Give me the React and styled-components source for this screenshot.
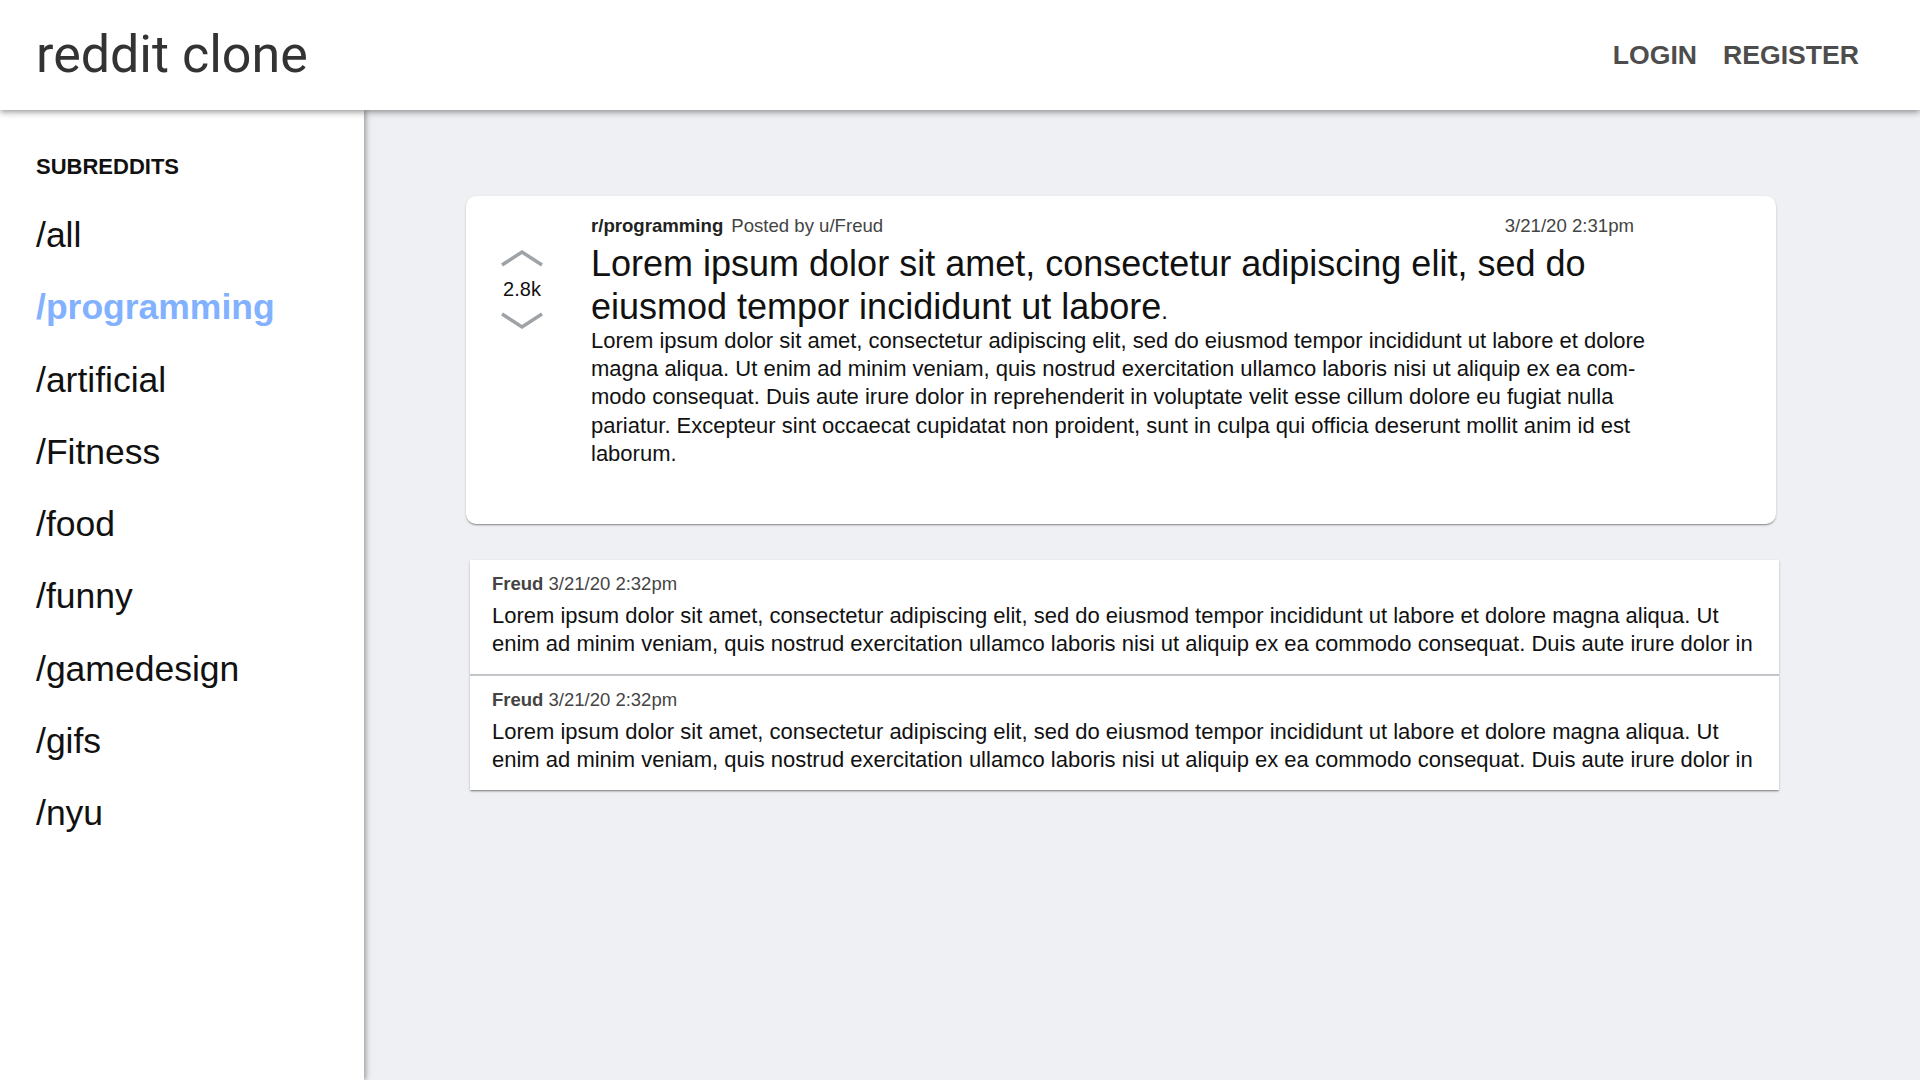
import React from 'react'
import styled, { createGlobalStyle } from 'styled-components'

const subreddits = ['all', 'programming', 'artificial', 'Fitness', 'food', 'funny', 'gamedesign', 'gifs', 'nyu']

const lorem =
  'Lorem ipsum dolor sit amet, consectetur adipiscing elit, sed do eiusmod tempor incididunt ut labore et dolore magna aliqua. Ut enim ad minim veniam, quis nostrud exercitation ullamco laboris nisi ut aliquip ex ea com\u00ADmodo consequat. Duis aute irure dolor in reprehenderit in voluptate velit esse cillum dolore eu fugiat nulla pariatur. Excepteur sint occaecat cupidatat non proident, sunt in culpa qui officia deserunt mollit anim id est laborum.'

const comments = [
  { author: 'Freud', date: '3/21/20 2:32pm', body: lorem },
  { author: 'Freud', date: '3/21/20 2:32pm', body: lorem },
]

const GlobalStyle = createGlobalStyle`
  body {
    margin: 0;
    font-family: "Liberation Sans", Arial, Helvetica, sans-serif;
    background: #eff0f4;
  }
`

const App = () => {
  return (
    <>
      <GlobalStyle />
      <Page>
        <Header>
          <Logo>reddit clone</Logo>
          <Nav>
            <NavLink>LOGIN</NavLink>
            <NavLink>REGISTER</NavLink>
          </Nav>
        </Header>
        <Body>
          <Sidebar>
            <SidebarTitle>SUBREDDITS</SidebarTitle>
            {subreddits.map((name) => (
              <SubLink key={name} $active={name === 'programming'}>
                /{name}
              </SubLink>
            ))}
          </Sidebar>
          <Main>
            <PostCard>
              <VoteCol>
                <Chevron viewBox="0 0 44 18">
                  <polyline points="2,16 22,3 42,16" />
                </Chevron>
                <Score>2.8k</Score>
                <Chevron viewBox="0 0 44 18">
                  <polyline points="2,2 22,15 42,2" />
                </Chevron>
              </VoteCol>
              <PostContent>
                <PostMeta>
                  <span>
                    <SubName>r/programming</SubName>
                    <Author>Posted by u/Freud</Author>
                  </span>
                  <PostDate>3/21/20 2:31pm</PostDate>
                </PostMeta>
                <PostTitle>
                  Lorem ipsum dolor sit amet, consectetur adipiscing elit, sed do eiusmod tempor incididunt ut
                  labore<small>.</small>
                </PostTitle>
                <PostBody>{lorem}</PostBody>
              </PostContent>
            </PostCard>
            <CommentList>
              {comments.map((c, i) => (
                <Comment key={i}>
                  <CommentMeta>
                    <b>{c.author}</b> {c.date}
                  </CommentMeta>
                  <CommentBody>{c.body}</CommentBody>
                </Comment>
              ))}
            </CommentList>
          </Main>
        </Body>
      </Page>
    </>
  )
}

export default App

const Page = styled.div`
  display: flex;
  flex-direction: column;
  min-height: 100vh;
`

const Header = styled.header`
  position: relative;
  z-index: 2;
  height: 110px;
  flex-shrink: 0;
  display: flex;
  align-items: center;
  justify-content: space-between;
  padding: 0 61px 0 36px;
  background: #fff;
  box-shadow: 0px 2px 4px -1px rgba(0, 0, 0, 0.2), 0px 4px 5px 0px rgba(0, 0, 0, 0.14),
    0px 1px 10px 0px rgba(0, 0, 0, 0.12);
`

const Logo = styled.h1`
  margin: 0;
  font-family: Roboto, "Liberation Sans", sans-serif;
  font-weight: 400;
  font-size: 52px;
  line-height: 1;
  color: #333;
`

const Nav = styled.nav`
  display: flex;
  gap: 26px;
`

const NavLink = styled.a`
  font-size: 26.6px;
  font-weight: 700;
  color: #4d4d4d;
  cursor: pointer;
`

const Body = styled.div`
  flex: 1;
  display: flex;
`

const Sidebar = styled.aside`
  position: relative;
  z-index: 1;
  width: 364px;
  flex-shrink: 0;
  background: #fff;
  padding: 44px 0 0 36px;
  box-sizing: border-box;
  box-shadow: 2px 0 4px rgba(0, 0, 0, 0.25), 4px 0 6px rgba(0, 0, 0, 0.08);
`

const SidebarTitle = styled.div`
  font-size: 22px;
  font-weight: 700;
  line-height: 26px;
  color: #111;
  margin-bottom: 19px;
`

const SubLink = styled.a`
  display: block;
  font-size: 35.5px;
  line-height: 72.3px;
  font-weight: ${(p) => (p.$active ? 700 : 400)};
  color: ${(p) => (p.$active ? '#82b1ff' : '#111')};
  cursor: pointer;
`

const Main = styled.main`
  flex: 1;
  padding: 86px 144px 40px 102px;
  background: #eff0f4;
`

const PostCard = styled.section`
  display: flex;
  background: #fff;
  border-radius: 10px;
  padding: 19px 0 56px 34px;
  box-shadow: 0px 2px 2px -1px rgba(0, 0, 0, 0.25), 0px 1px 1px 0px rgba(0, 0, 0, 0.14),
    0px 1px 3px 0px rgba(0, 0, 0, 0.12);
`

const VoteCol = styled.div`
  width: 44px;
  margin-right: 47px;
  padding-top: 34px;
  display: flex;
  flex-direction: column;
  align-items: center;
  gap: 11px;
`

const Chevron = styled.svg`
  width: 44px;
  height: 18px;
  fill: none;
  stroke: #9ea3a8;
  stroke-width: 3.5;
`

const Score = styled.div`
  font-size: 20px;
  line-height: 23px;
  color: #111;
`

const PostContent = styled.div`
  width: 1070px;
`

const PostMeta = styled.div`
  display: flex;
  justify-content: space-between;
  padding-right: 27px;
  font-size: 18.6px;
  line-height: 22px;
  margin-bottom: 5px;
`

const SubName = styled.b`
  color: #222;
  margin-right: 8px;
`

const Author = styled.span`
  color: #444;
`

const PostDate = styled.span`
  color: #444;
`

const PostTitle = styled.h2`
  margin: 0;
  font-size: 36px;
  font-weight: 400;
  line-height: 43px;
  color: #111;

  small {
    font-size: 24px;
    line-height: 1;
  }
`

const PostBody = styled.p`
  margin: -1px 0 0;
  font-size: 22px;
  line-height: 28.2px;
  color: #111;
`

const CommentList = styled.div`
  margin: 36px -3px 0 4px;
`

const Comment = styled.article`
  background: #fff;
  padding: 13px 22px 16px;
  box-shadow: 0px 2px 2px -1px rgba(0, 0, 0, 0.3), 0px 1px 1px 0px rgba(0, 0, 0, 0.14),
    0px 1px 3px 0px rgba(0, 0, 0, 0.12);

  & + & {
    border-top: 2px solid #c3c5c9;
  }
`

const CommentMeta = styled.div`
  font-size: 18.5px;
  line-height: 22px;
  color: #444;
  margin-bottom: 7px;
`

const CommentBody = styled.p`
  margin: 0;
  font-size: 22px;
  line-height: 28px;
  max-height: 56px;
  overflow: hidden;
  color: #111;
`
